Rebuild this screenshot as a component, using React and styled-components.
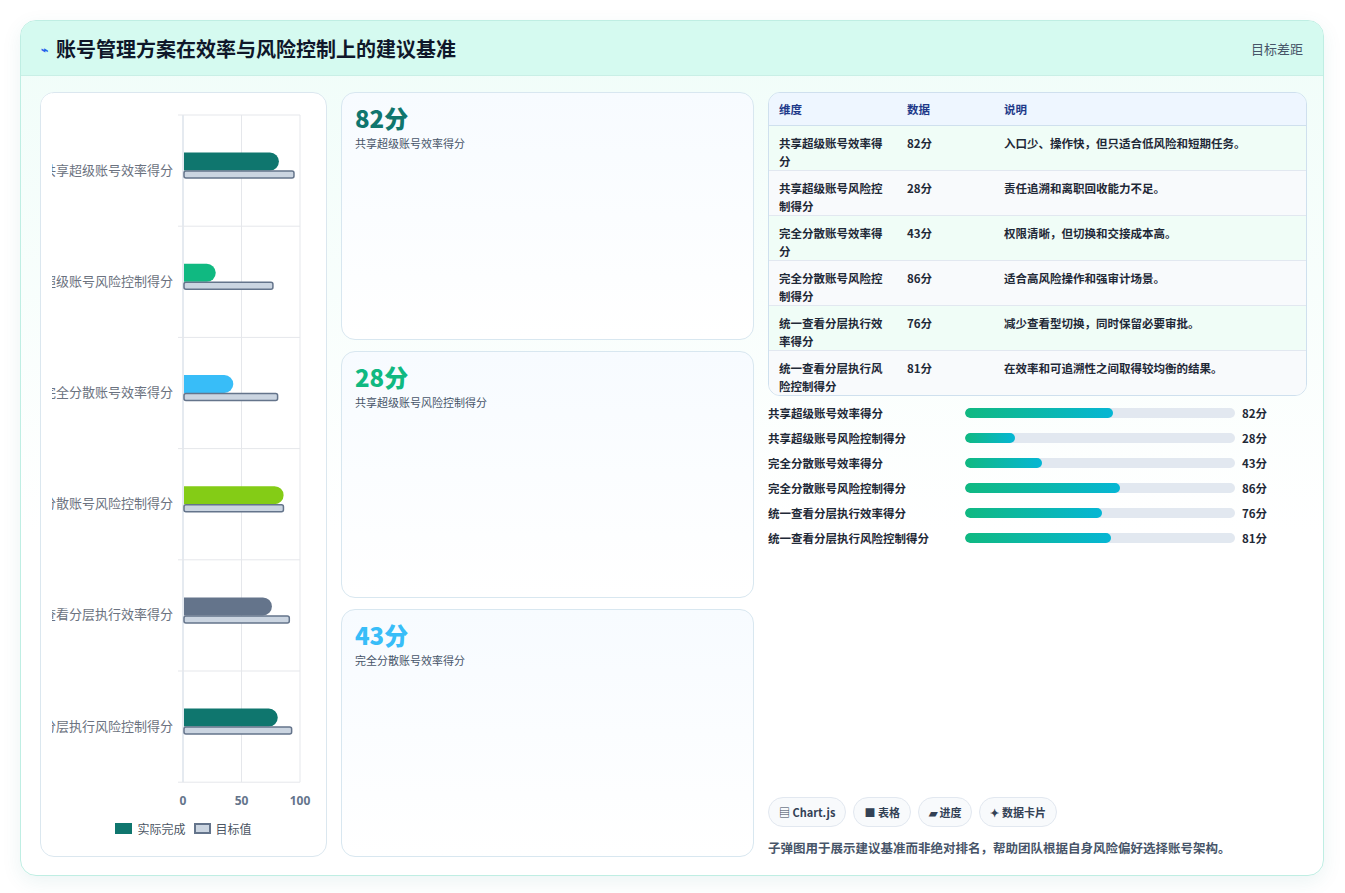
import React from "react";
import styled, { createGlobalStyle } from "styled-components";

const Global = createGlobalStyle`
  html,body{margin:0;padding:0;background:#fff;}
  body{font-family:"Noto Sans CJK SC","Noto Sans",sans-serif;}
`;

const rows = [
  { name: "共享超级账号效率得分", v: 82, t: 94, c: "#0f766e", desc: "入口少、操作快，但只适合低风险和短期任务。" },
  { name: "共享超级账号风险控制得分", v: 28, t: 76, c: "#10b981", desc: "责任追溯和离职回收能力不足。" },
  { name: "完全分散账号效率得分", v: 43, t: 80, c: "#38bdf8", desc: "权限清晰，但切换和交接成本高。" },
  { name: "完全分散账号风险控制得分", v: 86, t: 85, c: "#84cc16", desc: "适合高风险操作和强审计场景。" },
  { name: "统一查看分层执行效率得分", v: 76, t: 90, c: "#64748b", desc: "减少查看型切换，同时保留必要审批。" },
  { name: "统一查看分层执行风险控制得分", v: 81, t: 92, c: "#0f766e", desc: "在效率和可追溯性之间取得较均衡的结果。" },
];

const Page = styled.div`
  padding: 20px 21px 18px 20px;
`;
const Card = styled.div`
  border: 1px solid #bfeee3;
  border-radius: 16px;
  background: linear-gradient(180deg, #f0fdf9 0%, #ffffff 60%);
  box-shadow: 0 6px 20px rgba(15, 118, 110, 0.08);
  overflow: hidden;
`;
const Header = styled.div`
  height: 54px;
  background: #d5faf0;
  border-bottom: 1px solid #c9efe6;
  display: flex;
  align-items: center;
  justify-content: space-between;
  padding: 0 20px;
`;
const Title = styled.h1`
  margin: 0;
  font-size: 20px;
  font-weight: 700;
  color: #0f172a;
  display: flex;
  align-items: center;
  gap: 8px;
`;
const Bolt = styled.span`
  color: #2563eb;
  font-size: 12px;
`;
const HeaderRight = styled.span`
  font-size: 13px;
  color: #475569;
`;
const Body = styled.div`
  display: grid;
  grid-template-columns: 287px 413px 539px;
  gap: 14px;
  padding: 16px 18px 18px 19px;
  height: 765px;
`;
const Panel = styled.div`
  background: #fff;
  border: 1px solid #dbe7ef;
  border-radius: 14px;
  overflow: hidden;
  display: flex;
  flex-direction: column;
  align-items: center;
`;
const Legend = styled.div`
  display: flex;
  gap: 8px;
  font-size: 12px;
  color: #4b5563;
  margin-top: 2px;
`;
const LegendItem = styled.span`
  display: flex;
  align-items: center;
  gap: 5px;
`;
const Swatch = styled.span`
  width: 17px;
  height: 11px;
  background: ${(p) => p.bg};
  border: ${(p) => (p.bd ? "2px solid #64748b" : "none")};
  box-sizing: border-box;
`;
const Mid = styled.div`
  display: flex;
  flex-direction: column;
  gap: 11px;
`;
const Stat = styled.div`
  flex: 1;
  border: 1px solid #d8e7f0;
  border-radius: 14px;
  background: linear-gradient(180deg, #f7fbff 0%, #ffffff 100%);
  padding: 10px 13px;
`;
const Big = styled.div`
  font-size: 24px;
  font-weight: 800;
  color: ${(p) => p.c};
  line-height: 30px;
`;
const Sub = styled.div`
  font-size: 11px;
  color: #475569;
  margin-top: 2px;
`;
const Right = styled.div`
  display: flex;
  flex-direction: column;
`;
const Table = styled.table`
  width: 100%;
  border-collapse: separate;
  border-spacing: 0;
  border: 1px solid #cfe0ee;
  border-radius: 12px;
  overflow: hidden;
  font-size: 11.5px;
  font-weight: 600;
  table-layout: fixed;
`;
const Th = styled.th`
  text-align: left;
  background: #eef6ff;
  color: #1e3a8a;
  font-weight: 700;
  height: 32px;
  padding: 0 10px;
  border-bottom: 1px solid #cfe0ee;
`;
const Td = styled.td`
  padding: 8px 10px 0;
  height: 44px;
  box-sizing: border-box;
  vertical-align: top;
  color: #1f2937;
  line-height: 18px;
  background: ${(p) => (p.alt ? "#f8fafc" : "#f0fdf7")};
  border-top: ${(p) => (p.first ? "none" : "1px solid #e2e8f0")};
`;
const Bars = styled.div`
  display: flex;
  flex-direction: column;
  gap: 7px;
  margin-top: 8px;
`;
const BarRow = styled.div`
  display: grid;
  grid-template-columns: 197px 270px 1fr;
  align-items: center;
  font-size: 11.5px;
  font-weight: 600;
  color: #1f2937;
  height: 18px;
`;
const Track = styled.div`
  height: 10px;
  border-radius: 5px;
  background: #e2e8f0;
  overflow: hidden;
`;
const Fill = styled.div`
  height: 100%;
  border-radius: 5px;
  background: linear-gradient(90deg, #10b981, #06b6d4);
`;
const Val = styled.span`
  font-weight: 700;
  padding-left: 7px;
`;
const Spacer = styled.div`
  flex: 1;
`;
const Chips = styled.div`
  display: flex;
  gap: 7px;
`;
const Chip = styled.span`
  font-size: 11px;
  font-weight: 700;
  color: #334155;
  border: 1px solid #e2e8f0;
  background: #f8fafc;
  border-radius: 15px;
  padding: 6px 10px;
`;
const Note = styled.p`
  margin: 11px 0 0;
  font-size: 12.5px;
  font-weight: 600;
  color: #475569;
`;

function Chart() {
  const x0 = 143, w = 117, top = 22, rh = 111.2;
  return (
    <svg width="287" height="725" style={{ display: "block" }}>
      {[0, 50, 100].map((t) => (
        <line key={t} x1={x0 + (t / 100) * w} x2={x0 + (t / 100) * w} y1={top} y2={top + rh * 6} stroke={t === 0 ? "#cbd5e1" : "#e5e7eb"} />
      ))}
      {Array.from({ length: 7 }).map((_, i) => (
        <line key={i} x1={x0 - 5} x2={x0 + w} y1={top + rh * i} y2={top + rh * i} stroke="#e5e7eb" />
      ))}
      {rows.map((r, i) => {
        const cy = top + rh * i + rh / 2;
        const bw = (r.v / 100) * w;
        const y1 = cy - 18;
        return (
          <g key={i}>
            <text x={x0 - 10} y={cy + 4} textAnchor="end" fontSize="13" fill="#6b7280" fontFamily="Noto Sans CJK SC">{r.name}</text>
            <path d={`M${x0 + 1} ${y1} H${x0 + bw - 9} A9 9 0 0 1 ${x0 + bw - 9} ${y1 + 18} H${x0 + 1} Z`} fill={r.c} />
            <rect x={x0 + 1} y={cy + 0.5} width={(r.t / 100) * w} height={7} rx={2} fill="#cbd5e1" stroke="#64748b" strokeWidth="1.5" />
          </g>
        );
      })}
      <rect x={0} y={0} width={12} height={725} fill="#fff" />
      {[0, 50, 100].map((t) => (
        <text key={t} x={x0 + (t / 100) * w} y={top + rh * 6 + 23} textAnchor="middle" fontSize="12" fontWeight="700" fill="#64748b" fontFamily="Noto Sans">{t}</text>
      ))}
    </svg>
  );
}

export default function App() {
  return (
    <Page>
      <Global />
      <Card>
        <Header>
          <Title><Bolt>⌁</Bolt>账号管理方案在效率与风险控制上的建议基准</Title>
          <HeaderRight>目标差距</HeaderRight>
        </Header>
        <Body>
          <Panel>
            <Chart />
            <Legend>
              <LegendItem><Swatch bg="#0f766e" />实际完成</LegendItem>
              <LegendItem><Swatch bg="#cbd5e1" bd />目标值</LegendItem>
            </Legend>
          </Panel>
          <Mid>
            {rows.slice(0, 3).map((r, i) => (
              <Stat key={i}>
                <Big c={["#0f766e", "#10b981", "#38bdf8"][i]}>{r.v}分</Big>
                <Sub>{r.name}</Sub>
              </Stat>
            ))}
          </Mid>
          <Right>
            <Table>
              <colgroup><col style={{ width: 128 }} /><col style={{ width: 97 }} /><col /></colgroup>
              <thead><tr><Th>维度</Th><Th>数据</Th><Th>说明</Th></tr></thead>
              <tbody>
                {rows.map((r, i) => (
                  <tr key={i}>
                    <Td alt={i % 2 === 1} first={i === 0}>{r.name}</Td>
                    <Td alt={i % 2 === 1} first={i === 0}>{r.v}分</Td>
                    <Td alt={i % 2 === 1} first={i === 0}>{r.desc}</Td>
                  </tr>
                ))}
              </tbody>
            </Table>
            <Bars>
              {rows.map((r, i) => (
                <BarRow key={i}>
                  <span>{r.name}</span>
                  <Track><Fill style={{ width: `${(r.v / 150) * 100}%` }} /></Track>
                  <Val>{r.v}分</Val>
                </BarRow>
              ))}
            </Bars>
            <Spacer />
            <Chips>
              <Chip>▤ Chart.js</Chip>
              <Chip>■ 表格</Chip>
              <Chip>▰ 进度</Chip>
              <Chip>✦ 数据卡片</Chip>
            </Chips>
            <Note>子弹图用于展示建议基准而非绝对排名，帮助团队根据自身风险偏好选择账号架构。</Note>
          </Right>
        </Body>
      </Card>
    </Page>
  );
}
